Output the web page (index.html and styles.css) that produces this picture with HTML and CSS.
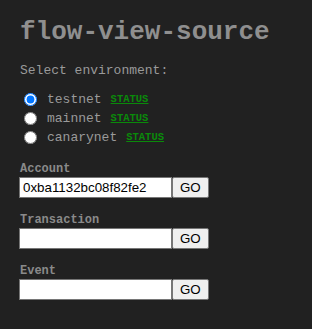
FILE: index.html
```html
<!DOCTYPE html>
<html>
<head>
<meta charset="utf-8">
<link rel="stylesheet" href="styles.css">
</head>
<body>
<div class="page">
  <h1 class="title">flow-view-source</h1>
  <p class="prompt">Select environment:</p>
  <div class="envs">
    <label class="env"><input type="radio" name="env" checked><span class="name">testnet</span><a class="status" href="#">STATUS</a></label>
    <label class="env"><input type="radio" name="env"><span class="name">mainnet</span><a class="status" href="#">STATUS</a></label>
    <label class="env"><input type="radio" name="env"><span class="name">canarynet</span><a class="status" href="#">STATUS</a></label>
  </div>
  <div class="field">
    <div class="label">Account</div>
    <div class="row"><input class="text" type="text" value="0xba1132bc08f82fe2"><button class="go">GO</button></div>
  </div>
  <div class="field">
    <div class="label">Transaction</div>
    <div class="row"><input class="text" type="text"><button class="go">GO</button></div>
  </div>
  <div class="field">
    <div class="label">Event</div>
    <div class="row"><input class="text" type="text"><button class="go">GO</button></div>
  </div>
</div>
</body>
</html>
```
FILE: styles.css
```css
html, body {
  margin: 0;
  background: #212121;
}
body {
  font-family: "Liberation Mono", "Courier New", monospace;
  color: #9a9a9a;
}
.page {
  padding: 17px 19px;
}
.title {
  margin: 0 0 0 1px;
  font-size: 26px;
  line-height: 30px;
  font-weight: bold;
  color: #8f8f8f;
}
.prompt {
  margin: 16px 0 0 1px;
  font-size: 13px;
  line-height: 16px;
}
.envs {
  margin-top: 11px;
  display: flex;
  flex-direction: column;
}
.env {
  font-size: 13px;
  line-height: 19px;
  height: 19px;
  display: flex;
  align-items: center;
}
.env input {
  margin: 0 10px 0 5px;
  width: 13px;
  height: 13px;
}
.status {
  margin-left: 9px;
  font-size: 10.5px;
  font-weight: bold;
  color: #0a8a0a;
}
.field {
  margin-top: 14px;
}
.label {
  margin-left: 1px;
  font-size: 12px;
  font-weight: bold;
  line-height: 16px;
  color: #8a8a8a;
}
.row {
  display: flex;
}
.text {
  box-sizing: border-box;
  width: 153px;
  height: 21px;
  margin: 0;
  padding: 1px 3px;
  border: 1px solid #767676;
  font-family: "Liberation Sans", Arial, sans-serif;
  font-size: 13.33px;
  color: #000;
}
.go {
  box-sizing: border-box;
  margin: 0;
  height: 21px;
  padding: 0 7px;
  border: 1px solid #767676;
  border-radius: 2px;
  background: #efefef;
  font-family: "Liberation Sans", Arial, sans-serif;
  font-size: 13.33px;
  color: #000;
}
```
